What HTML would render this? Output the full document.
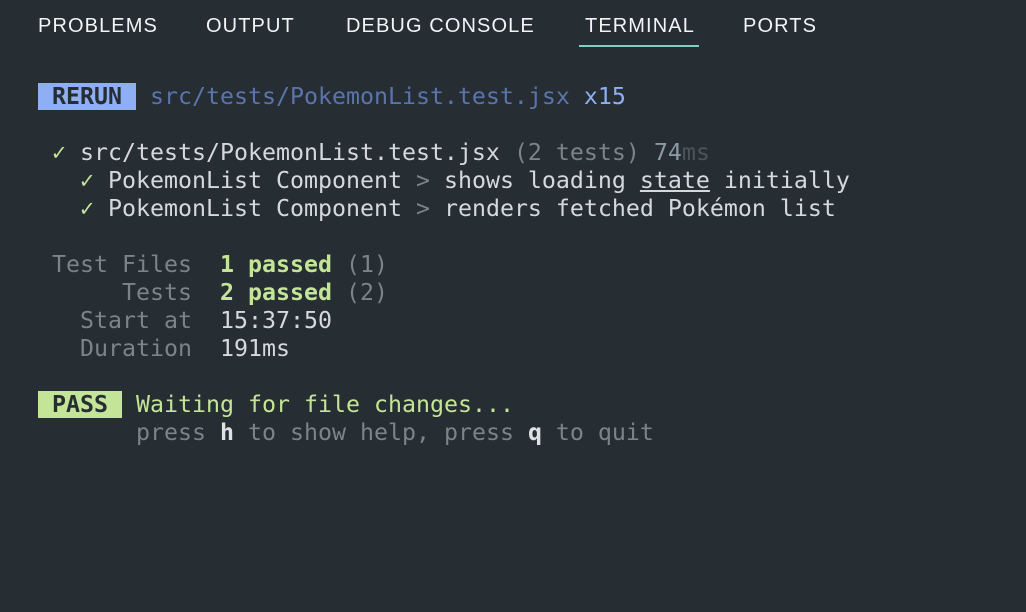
<!DOCTYPE html>
<html><head><meta charset="utf-8"><style>
html,body{margin:0;padding:0;background:#262d33;width:1026px;height:612px;overflow:hidden}
.tab{position:absolute;top:13px;font-family:"Liberation Sans",sans-serif;font-size:20px;color:#f2f4f5;letter-spacing:1.1px;line-height:26px;white-space:nowrap}
.ul{position:absolute;left:579px;top:45px;width:120px;height:2px;background:#83cdc5}
.term{position:absolute;left:38px;top:83px;font-family:"DejaVu Sans Mono","Liberation Mono",monospace;font-size:23.25px;line-height:28px;color:#d5d9dc;white-space:pre}
.l{height:28px}
.g{color:#c4e598}.gb{color:#c4e598;font-weight:bold}
.dim{color:#7b8489}.dk{color:#4b555c}.p{color:#5b74ab}.x{color:#8eaff4}.n{color:#8a9aa6}
.rb{background:#8eaff4;color:#262d33;font-weight:bold}
.pb{background:#c4e598;color:#262d33;font-weight:bold}
.w{color:#dfe2e4;font-weight:bold}
</style></head><body>
<div class="tab" style="left:38px">PROBLEMS</div>
<div class="tab" style="left:206px">OUTPUT</div>
<div class="tab" style="left:346px">DEBUG CONSOLE</div>
<div class="tab" style="left:585px">TERMINAL</div>
<div class="tab" style="left:743px">PORTS</div>
<div class="ul"></div>
<div class="term"><div class="l"><span class="rb"> RERUN </span> <span class="p">src/tests/PokemonList.test.jsx</span> <span class="x">x15</span></div><div class="l"></div><div class="l"> <span class="g">✓</span> src/tests/PokemonList.test.jsx <span class="dim">(2 tests)</span> <span class="n">74</span><span class="dk">ms</span></div><div class="l">   <span class="g">✓</span> PokemonList Component <span class="dim">&gt;</span> shows loading <u>state</u> initially</div><div class="l">   <span class="g">✓</span> PokemonList Component <span class="dim">&gt;</span> renders fetched Pokémon list</div><div class="l"></div><div class="l"><span class="dim"> Test Files </span> <span class="gb">1 passed</span> <span class="dim">(1)</span></div><div class="l"><span class="dim">      Tests </span> <span class="gb">2 passed</span> <span class="dim">(2)</span></div><div class="l"><span class="dim">   Start at </span> 15:37:50</div><div class="l"><span class="dim">   Duration </span> 191ms</div><div class="l"></div><div class="l"><span class="pb"> PASS </span> <span class="g">Waiting for file changes...</span></div><div class="l"><span class="dim">       press </span><span class="w">h</span><span class="dim"> to show help, press </span><span class="w">q</span><span class="dim"> to quit</span></div></div>
</body></html>
